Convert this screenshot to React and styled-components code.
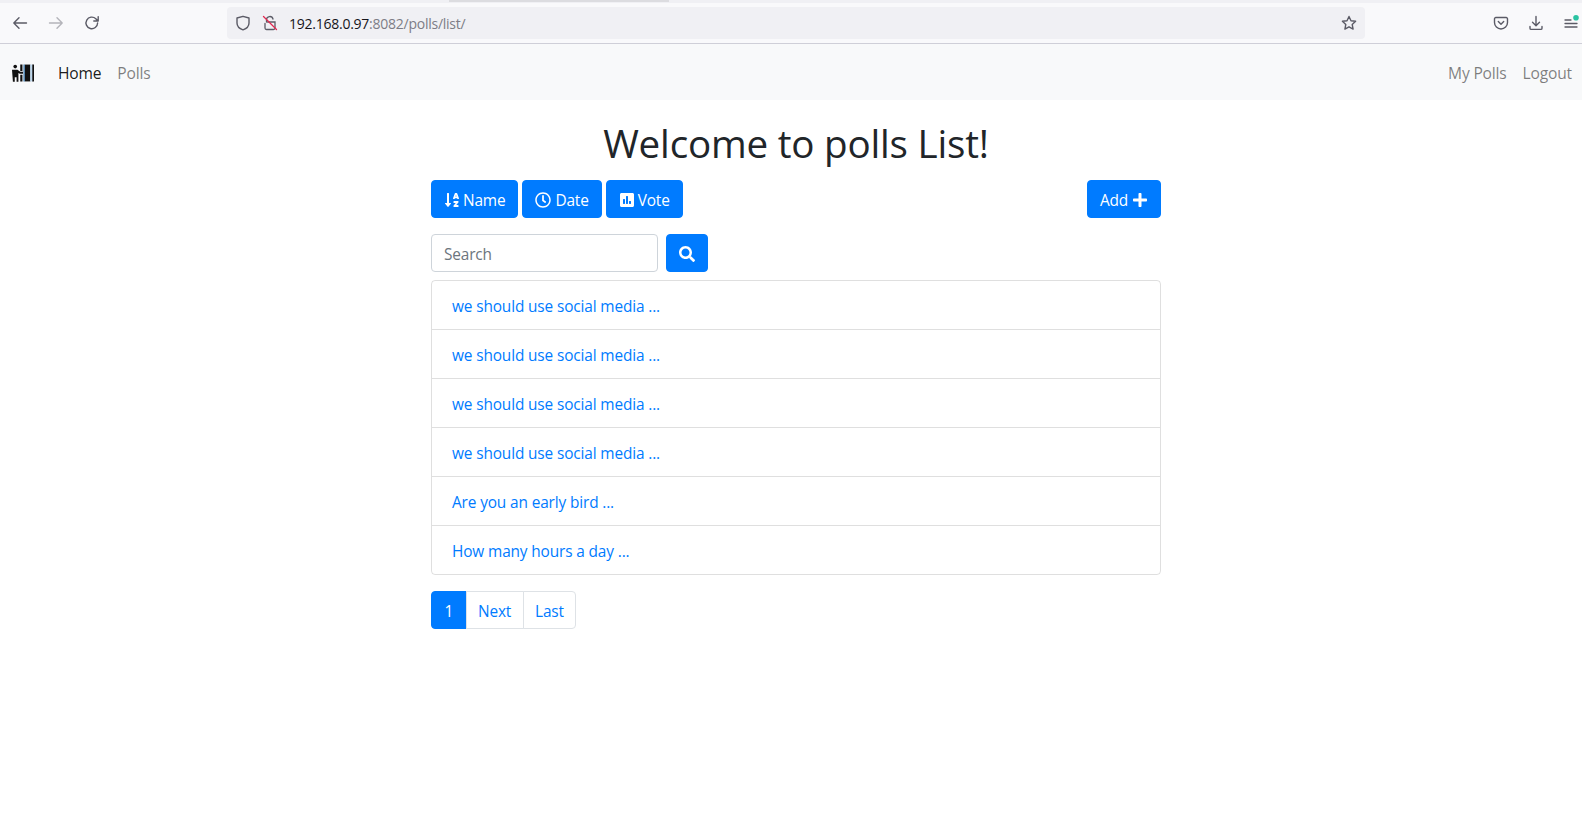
import React from "react";
import styled, { createGlobalStyle } from "styled-components";
import { FaSortAlphaDown, FaRegClock, FaPoll, FaSearch, FaPlus } from "react-icons/fa";

const Global = createGlobalStyle`
  html, body { margin: 0; padding: 0; background: #fff; }
  body { font-family: "Open Sans", "Noto Sans", sans-serif; font-size: 16px; line-height: 24px; color: #212529; }
  * { box-sizing: border-box; }
  a { text-decoration: none; }
`;

const Page = styled.div`
  width: 1582px;
  height: 815px;
  overflow: hidden;
`;

const TabStrip = styled.div`
  height: 3px;
  background: #f0f0f4;
  display: flex;
  padding-left: 449px;
`;
const TabEdge = styled.div`
  width: 220px;
  height: 2px;
  background: #dcdce0;
`;

const BrowserBar = styled.div`
  height: 41px;
  background: #f9f9fb;
  border-bottom: 1px solid #cfcfd8;
  display: flex;
  align-items: center;
  padding-right: 3px;
`;
const NavIcons = styled.div`
  width: 227px;
  display: flex;
  align-items: center;
  gap: 20px;
  padding-left: 12px;
  color: #5b5b66;
  flex: none;
`;
const UrlBar = styled.div`
  width: 1138px;
  height: 32px;
  background: #f0f0f4;
  border-radius: 4px;
  display: flex;
  align-items: center;
  padding: 0 8px;
  flex: none;
  color: #5b5b66;
`;
const UrlText = styled.div`
  flex: 1;
  margin-left: 11px;
  padding-top: 1px;
  font-family: "Open Sans", sans-serif;
  font-size: 14px;
  letter-spacing: -0.25px;
  color: #15141a;
`;
const UrlDim = styled.span`
  color: #7d7d86;
`;
const Lock = styled.div`
  margin-left: 11px;
  display: flex;
`;
const RightIcons = styled.div`
  flex: 1;
  display: flex;
  justify-content: flex-end;
  align-items: center;
  gap: 19px;
  color: #5b5b66;
`;

const Navbar = styled.nav`
  height: 56px;
  background: #f8f9fa;
  display: flex;
  align-items: center;
  padding: 2px 2px 0 12px;
`;
const Brand = styled.a`
  display: flex;
  margin-right: 16px;
`;
const NavLink = styled.a`
  padding: 0 8px;
  font-size: 15.6px;
  letter-spacing: -0.18px;
  color: ${(p) => (p.$active ? "rgba(0,0,0,0.9)" : "rgba(0,0,0,0.5)")};
`;
const Spacer = styled.div`
  flex: 1;
`;

const Container = styled.main`
  width: 730px;
  margin-left: 431px;
  padding-top: 19px;
`;
const Title = styled.h1`
  margin: 0 0 13px;
  font-size: 38.6px;
  line-height: 48px;
  font-weight: 400;
  text-align: center;
  letter-spacing: -0.2px;
`;
const Toolbar = styled.div`
  display: flex;
  gap: 4px;
`;
const Button = styled.button`
  height: 38px;
  padding: 4px 12px 0;
  border: 1px solid #007bff;
  background: #007bff;
  color: #fff;
  border-radius: 4px;
  font: inherit;
  font-size: 15.4px;
  letter-spacing: -0.15px;
  display: inline-flex;
  align-items: center;
  gap: ${(p) => p.$gap || "3px"};
  margin-left: ${(p) => (p.$push ? "auto" : "0")};
`;
const ButtonIcon = styled.span`
  display: flex;
  margin-top: -3px;
`;
const SearchRow = styled.form`
  display: flex;
  gap: 8px;
  margin: 16px 0 8px;
`;
const SearchInput = styled.input`
  width: 227px;
  height: 38px;
  padding: 8px 12px 6px;
  border: 1px solid #ced4da;
  border-radius: 4px;
  font: inherit;
  font-size: 15.4px;
  letter-spacing: -0.15px;
  color: #495057;
  &::placeholder { color: #6c757d; opacity: 1; }
`;
const List = styled.ul`
  list-style: none;
  margin: 0 0 16px;
  padding: 0;
  border: 1px solid rgba(0,0,0,0.125);
  border-radius: 4px;
`;
const Row = styled.li`
  padding: 4px 20px 0;
  display: flex;
  align-items: center;
  border-top: ${(p) => (p.$first ? "none" : "1px solid rgba(0,0,0,0.125)")};
  height: ${(p) => (p.$first ? "48px" : "49px")};
`;
const RowLink = styled.a`
  color: #007bff;
  font-size: 15.4px;
  letter-spacing: -0.13px;
`;
const Pager = styled.div`
  display: inline-flex;
  height: 38px;
`;
const PageLink = styled.a`
  display: flex;
  align-items: center;
  padding: 4px ${(p) => (p.$active ? "12.5px" : "11.5px")} 0;
  font-size: 15.4px;
  letter-spacing: -0.2px;
  color: ${(p) => (p.$active ? "#fff" : "#007bff")};
  background: ${(p) => (p.$active ? "#007bff" : "#fff")};
  border: 1px solid ${(p) => (p.$active ? "#007bff" : "#dee2e6")};
  margin-left: ${(p) => (p.$first ? "0" : "-1px")};
  border-radius: ${(p) => (p.$first ? "4px 0 0 4px" : p.$last ? "0 4px 4px 0" : "0")};
`;
const Disabled = styled.span`
  display: flex;
  color: #b4b4ba;
`;
const Plain = styled.span`
  display: flex;
`;

const Ico = ({ children, size = 16, sw = 1.4 }) => (
  <svg width={size} height={size} viewBox="0 0 16 16" fill="none" stroke="currentColor" strokeWidth={sw} strokeLinecap="round" strokeLinejoin="round">
    {children}
  </svg>
);

const Logo = () => (
  <svg width="22" height="20" viewBox="0 0 24 20">
    <circle cx="3.500" cy="3" r="2" fill="#111" />
    <path d="M0 6.500h6l3 2.200h3v2.200H8.500L7 10v9.500H5v-5H3v5H1z" fill="#111" />
    <path d="M9 .8h2.400v7H9zM9 12h2.400v7.200H9z" fill="#111" />
    <path d="M14 .8h6v18.400h-6z" fill="#111" />
    <path d="M22 .8h2v18.400h-2z" fill="#111" />
    <path d="M12.500 .8h1.500v18.400h-1.500z" fill="#3f78a8" />
    <path d="M20 .8h2v18.400h-2z" fill="#bcd6ec" />
  </svg>
);

const titles = [
  "we should use social media ...",
  "we should use social media ...",
  "we should use social media ...",
  "we should use social media ...",
  "Are you an early bird ...",
  "How many hours a day ...",
];

export default function App() {
  return (
    <Page>
      <Global />
      <TabStrip><TabEdge /></TabStrip>
      <BrowserBar>
        <NavIcons>
          <Ico><path d="M14.500 8H1.800M7 2.800 1.800 8 7 13.200" /></Ico>
          <Disabled>
            <Ico><path d="M1.500 8h12.700M9 2.800 14.200 8 9 13.200" /></Ico>
          </Disabled>
          <Plain>
            <Ico><path d="M13.600 8A5.800 5.800 0 1 1 11.800 3.700L14 6M14.200 1.600V6H9.800" /></Ico>
          </Plain>
        </NavIcons>
        <UrlBar>
          <Ico><path d="M8 1.300 14 3v5c0 3.400-2.600 5.700-6 6.900C4.600 13.700 2 11.400 2 8V3z" /></Ico>
          <Lock>
            <svg width="16" height="16" viewBox="0 0 16 16" fill="none" strokeWidth="1.300" strokeLinecap="round">
              <path d="M4.500 7V4.800a3.300 3.300 0 0 1 6.500-.8M3 8.500V13a1.500 1.500 0 0 0 1.500 1.500h7A1.500 1.500 0 0 0 13 13V7H5.500" stroke="#5b5b66" />
              <path d="M1.500 1.500 14.500 14.500" stroke="#e22850" />
            </svg>
          </Lock>
          <UrlText>192.168.0.97<UrlDim>:8082/polls/list/</UrlDim></UrlText>
          <Ico><path d="m8 1.500 2 4.200 4.600.6-3.400 3.200.9 4.600L8 11.800l-4.100 2.300.9-4.600L1.400 6.300 6 5.700z" /></Ico>
        </UrlBar>
        <RightIcons>
          <Ico><path d="M2.800 2.500h10.400A1.300 1.300 0 0 1 14.500 3.800V7.500a6.500 6.500 0 0 1-13 0V3.800a1.300 1.300 0 0 1 1.300-1.300zM5.300 6.500 8 9.200l2.700-2.700" /></Ico>
          <Ico><path d="M8 1.500v9M4.500 7.200 8 10.700l3.500-3.500M2 11.500v1.700c0 .7.500 1.200 1.200 1.200h9.600c.7 0 1.200-.5 1.200-1.200v-1.700" /></Ico>
          <svg width="16" height="16" viewBox="0 0 16 16" fill="none" stroke="currentColor" strokeWidth="1.300" strokeLinecap="round">
            <path d="M2 5h6M2 8.500h12M2 12h12" />
            <circle cx="13" cy="2.800" r="2.800" fill="#2ac3a2" stroke="none" />
          </svg>
        </RightIcons>
      </BrowserBar>
      <Navbar>
        <Brand href="#"><Logo /></Brand>
        <NavLink $active href="#">Home</NavLink>
        <NavLink href="#">Polls</NavLink>
        <Spacer />
        <NavLink href="#">My Polls</NavLink>
        <NavLink href="#">Logout</NavLink>
      </Navbar>
      <Container>
        <Title>Welcome to polls List!</Title>
        <Toolbar>
          <Button><ButtonIcon><FaSortAlphaDown size={16} /></ButtonIcon>Name</Button>
          <Button $gap="4px"><ButtonIcon><FaRegClock size={16} /></ButtonIcon>Date</Button>
          <Button><ButtonIcon><FaPoll size={16} /></ButtonIcon>Vote</Button>
          <Button $push $gap="4px">Add<ButtonIcon><FaPlus size={16} /></ButtonIcon></Button>
        </Toolbar>
        <SearchRow>
          <SearchInput placeholder="Search" />
          <Button type="button"><ButtonIcon><FaSearch size={16} /></ButtonIcon></Button>
        </SearchRow>
        <List>
          {titles.map((t, i) => (
            <Row key={i} $first={i === 0}><RowLink href="#">{t}</RowLink></Row>
          ))}
        </List>
        <Pager>
          <PageLink $active $first href="#">1</PageLink>
          <PageLink href="#">Next</PageLink>
          <PageLink $last href="#">Last</PageLink>
        </Pager>
      </Container>
    </Page>
  );
}
